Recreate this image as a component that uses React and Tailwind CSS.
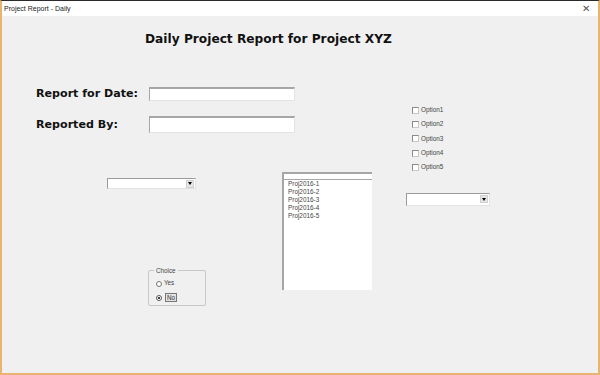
import React from 'react';

const sans = { fontFamily: '"Liberation Sans", Arial, sans-serif' };
const bold = { fontFamily: '"DejaVu Sans", Verdana, sans-serif' };

function DropButton() {
  return (
    <div className="flex h-[8px] w-[8px] items-center justify-center bg-[#e6e6e6] border border-[#d0d0d0]">
      <div className="h-0 w-0 border-x-[2px] border-t-[3px] border-x-transparent border-t-black" />
    </div>
  );
}

function Combo({ className }) {
  return (
    <div className={`flex items-center justify-end bg-white border border-t-[#9a9a9a] border-l-[#9a9a9a] border-b-[#e2e2e2] border-r-[#e2e2e2] pr-[1px] ${className}`}>
      <DropButton />
    </div>
  );
}

function TextBox({ className }) {
  return (
    <div className={`bg-white border border-t-2 border-t-[#a6a6a6] border-l-[#a6a6a6] border-b-[#e4e4e4] border-r-[#e4e4e4] ${className}`} />
  );
}

export default function App() {
  const options = ['Option1', 'Option2', 'Option3', 'Option4', 'Option5'];
  const projects = ['Proj2016-1', 'Proj2016-2', 'Proj2016-3', 'Proj2016-4', 'Proj2016-5'];

  return (
    <div className="w-[600px] h-[375px] overflow-hidden bg-[#f0f0f0] border-t border-t-[#2a2a2a] border-x-2 border-x-[#e8b470] border-b-2 border-b-[#e8b470] box-border">
      {/* title bar */}
      <div className="flex h-[15px] items-center justify-between bg-white pl-[2px] pr-[8px]" style={sans}>
        <span className="text-[7px] leading-none text-[#222]">Project Report - Daily</span>
        <span className="text-[10px] leading-none text-[#555]">✕</span>
      </div>

      {/* heading */}
      <div className="mt-[15px] pl-[143px] h-[16px] text-[12.2px] leading-[16px] font-bold text-[#111]" style={bold}>
        Daily Project Report for Project XYZ
      </div>

      <div className="flex items-start">
        {/* left part */}
        <div className="ml-[34px] flex flex-col">
          <div className="mt-[40px] flex h-[14px] items-center">
            <span className="w-[113px] text-[11.1px] font-bold text-[#111] leading-none" style={bold}>Report for Date:</span>
            <TextBox className="w-[146px] h-[14px]" />
          </div>
          <div className="mt-[15px] flex h-[17px] items-center">
            <span className="w-[113px] text-[11.1px] font-bold text-[#111] leading-none" style={bold}>Reported By:</span>
            <TextBox className="w-[146px] h-[17px]" />
          </div>

          <div className="mt-[39px] flex items-start">
            <div className="ml-[71px] flex w-[99px] flex-col">
              <Combo className="mt-[6px] w-[89px] h-[11px]" />
              {/* option frame */}
              <div className="relative ml-[41px] mt-[81px] h-[36px] w-[58px] rounded-[2px] border border-[#c8c8c8] pt-[7px] pl-[7px]" style={sans}>
                <span className="absolute left-[5px] top-[-4px] bg-[#f0f0f0] px-[2px] text-[6.3px] leading-[7px] text-[#444]">Choice</span>
                <div className="mt-[2px] flex h-[7px] items-center">
                  <span className="h-[6px] w-[6px] rounded-full border border-[#777] bg-white" />
                  <span className="ml-[2px] text-[6.3px] leading-none text-[#444]">Yes</span>
                </div>
                <div className="mt-[6px] flex h-[9px] items-center">
                  <span className="flex h-[6px] w-[6px] items-center justify-center rounded-full border border-[#555] bg-white">
                    <span className="h-[2px] w-[2px] rounded-full bg-black" />
                  </span>
                  <span className="ml-[3px] border border-[#777] bg-[#e4e4e4] px-[1px] text-[6.3px] leading-[7px] text-[#333]">No</span>
                </div>
              </div>
            </div>

            {/* list box */}
            <div className="ml-[76px] flex h-[118px] w-[90px] flex-col border-l-2 border-t-2 border-[#a6a6a6] bg-white" style={sans}>
              <div className="h-[6px] border-b border-[#a6a6a6]" />
              <div className="pl-[4px]">
                {projects.map((p) => (
                  <div key={p} className="h-[8px] text-[6.4px] leading-[8px] text-[#444]">{p}</div>
                ))}
              </div>
            </div>
          </div>
        </div>

        {/* right part */}
        <div className="ml-[34px] flex flex-col">
          <div className="mt-[60px] flex flex-col gap-[7.2px] pl-[6px]" style={sans}>
            {options.map((o) => (
              <div key={o} className="flex h-[7px] items-center">
                <span className="h-[7px] w-[7px] border border-t-[#8a8a8a] border-l-[#8a8a8a] border-b-[#c8c8c8] border-r-[#c8c8c8] bg-white" />
                <span className="ml-[2px] text-[6.4px] leading-none text-[#444]">{o}</span>
              </div>
            ))}
          </div>
          <Combo className="mt-[22px] w-[84px] h-[13px]" />
        </div>
      </div>
    </div>
  );
}
